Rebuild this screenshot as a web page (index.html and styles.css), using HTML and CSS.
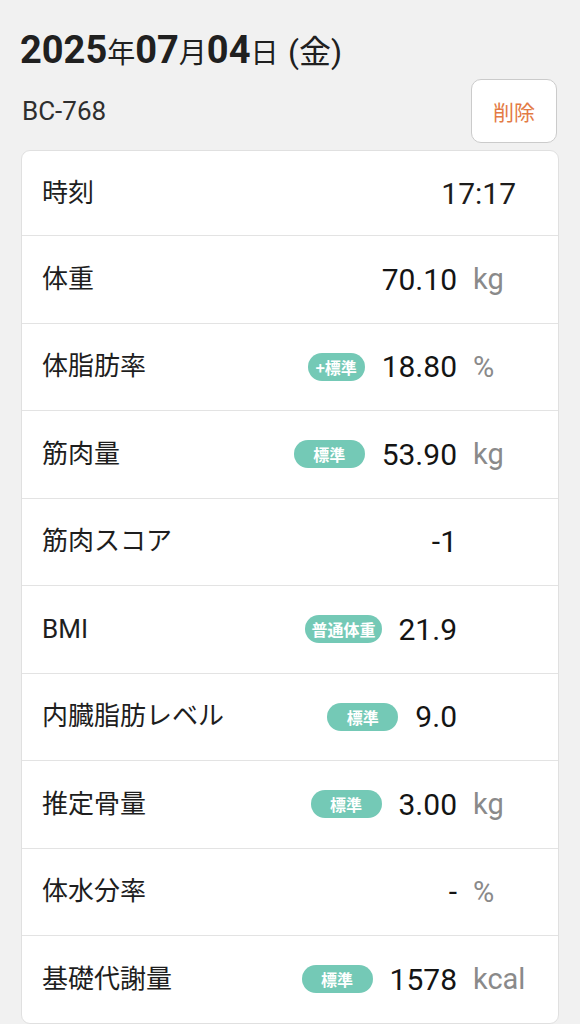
FILE: index.html
```html
<!DOCTYPE html>
<html lang="ja">
<head>
<meta charset="utf-8">
<title>2025年07月04日</title>
<link rel="stylesheet" href="styles.css">
</head>
<body>
<header class="header">
  <h1 class="date"><b>2025</b><span class="k">年</span><b>07</b><span class="k">月</span><b>04</b><span class="k">日</span> <span class="dow">(金)</span></h1>
  <div class="sub">
    <span class="model">BC-768</span>
    <button class="delete">削除</button>
  </div>
</header>
<main class="card">
  <div class="row row-time">
    <span class="label">時刻</span>
    <span class="time">17:17</span>
  </div>
  <div class="row">
    <span class="label">体重</span>
    <span class="val"><span class="num">70.10</span></span>
    <span class="unit">kg</span>
  </div>
  <div class="row">
    <span class="label">体脂肪率</span>
    <span class="val"><span class="badge badge-plus">+標準</span><span class="num">18.80</span></span>
    <span class="unit">%</span>
  </div>
  <div class="row">
    <span class="label">筋肉量</span>
    <span class="val"><span class="badge">標準</span><span class="num">53.90</span></span>
    <span class="unit">kg</span>
  </div>
  <div class="row">
    <span class="label">筋肉スコア</span>
    <span class="val"><span class="num">-1</span></span>
    <span class="unit"></span>
  </div>
  <div class="row">
    <span class="label label-latin">BMI</span>
    <span class="val"><span class="badge">普通体重</span><span class="num">21.9</span></span>
    <span class="unit"></span>
  </div>
  <div class="row">
    <span class="label">内臓脂肪レベル</span>
    <span class="val"><span class="badge">標準</span><span class="num">9.0</span></span>
    <span class="unit"></span>
  </div>
  <div class="row">
    <span class="label">推定骨量</span>
    <span class="val"><span class="badge">標準</span><span class="num">3.00</span></span>
    <span class="unit">kg</span>
  </div>
  <div class="row">
    <span class="label">体水分率</span>
    <span class="val"><span class="num">-</span></span>
    <span class="unit">%</span>
  </div>
  <div class="row">
    <span class="label">基礎代謝量</span>
    <span class="val"><span class="badge">標準</span><span class="num">1578</span></span>
    <span class="unit">kcal</span>
  </div>
</main>
</body>
</html>
```

FILE: styles.css
```css
* { box-sizing: border-box; }

html, body {
  margin: 0;
  padding: 0;
  background: #f1f1f1;
  font-family: Roboto, "Noto Sans CJK JP", sans-serif;
  color: #1c1c1c;
}

.header {
  padding: 27px 23px 0 20px;
}

.date {
  margin: 0;
  font-size: 38px;
  line-height: 46px;
  height: 46px;
  font-weight: 400;
  color: #202020;
  white-space: nowrap;
}

.date b {
  font-weight: 700;
}

.date .k {
  font-size: 28px;
  font-weight: 400;
}

.date .dow {
  font-size: 32px;
}

.sub {
  display: flex;
  align-items: center;
  justify-content: space-between;
  margin-top: 6px;
  padding-left: 2px;
}

.model {
  font-size: 26px;
  color: #2e2e2e;
}

.delete {
  width: 86px;
  height: 64px;
  border: 1.5px solid #cbcbcb;
  border-radius: 10px;
  background: #fff;
  color: #e37a44;
  font-family: "Noto Sans CJK JP", sans-serif;
  font-size: 21px;
  padding: 0;
}

.card {
  margin: 7px 21px 0 21px;
  background: #fff;
  border: 1px solid #e0e0e0;
  border-radius: 9px;
}

.row {
  display: flex;
  align-items: center;
  height: 87.5px;
  padding-left: 20px;
  border-top: 1px solid #e3e3e3;
}

.row-time {
  height: 84px;
  border-top: none;
}

.label {
  flex: 1;
  font-size: 26px;
  padding-bottom: 6px;
  color: #1e1e1e;
}

.label-latin {
  padding-bottom: 0;
}

.time {
  font-size: 30px;
  padding-right: 42px;
  color: #1c1c1c;
}

.val {
  display: flex;
  align-items: center;
  gap: 17px;
}

.num {
  font-size: 30px;
  color: #141414;
}

.unit {
  width: 85px;
  margin-left: 16px;
  font-size: 29px;
  color: #8a8a8a;
}

.badge {
  min-width: 71px;
  height: 28px;
  padding: 0 6px;
  border-radius: 14px;
  background: #74c9b6;
  color: #fff;
  font-family: "Noto Sans CJK JP", sans-serif;
  font-size: 16px;
  font-weight: 700;
  display: flex;
  align-items: center;
  justify-content: center;
}

.badge-plus {
  min-width: 57px;
}
```
